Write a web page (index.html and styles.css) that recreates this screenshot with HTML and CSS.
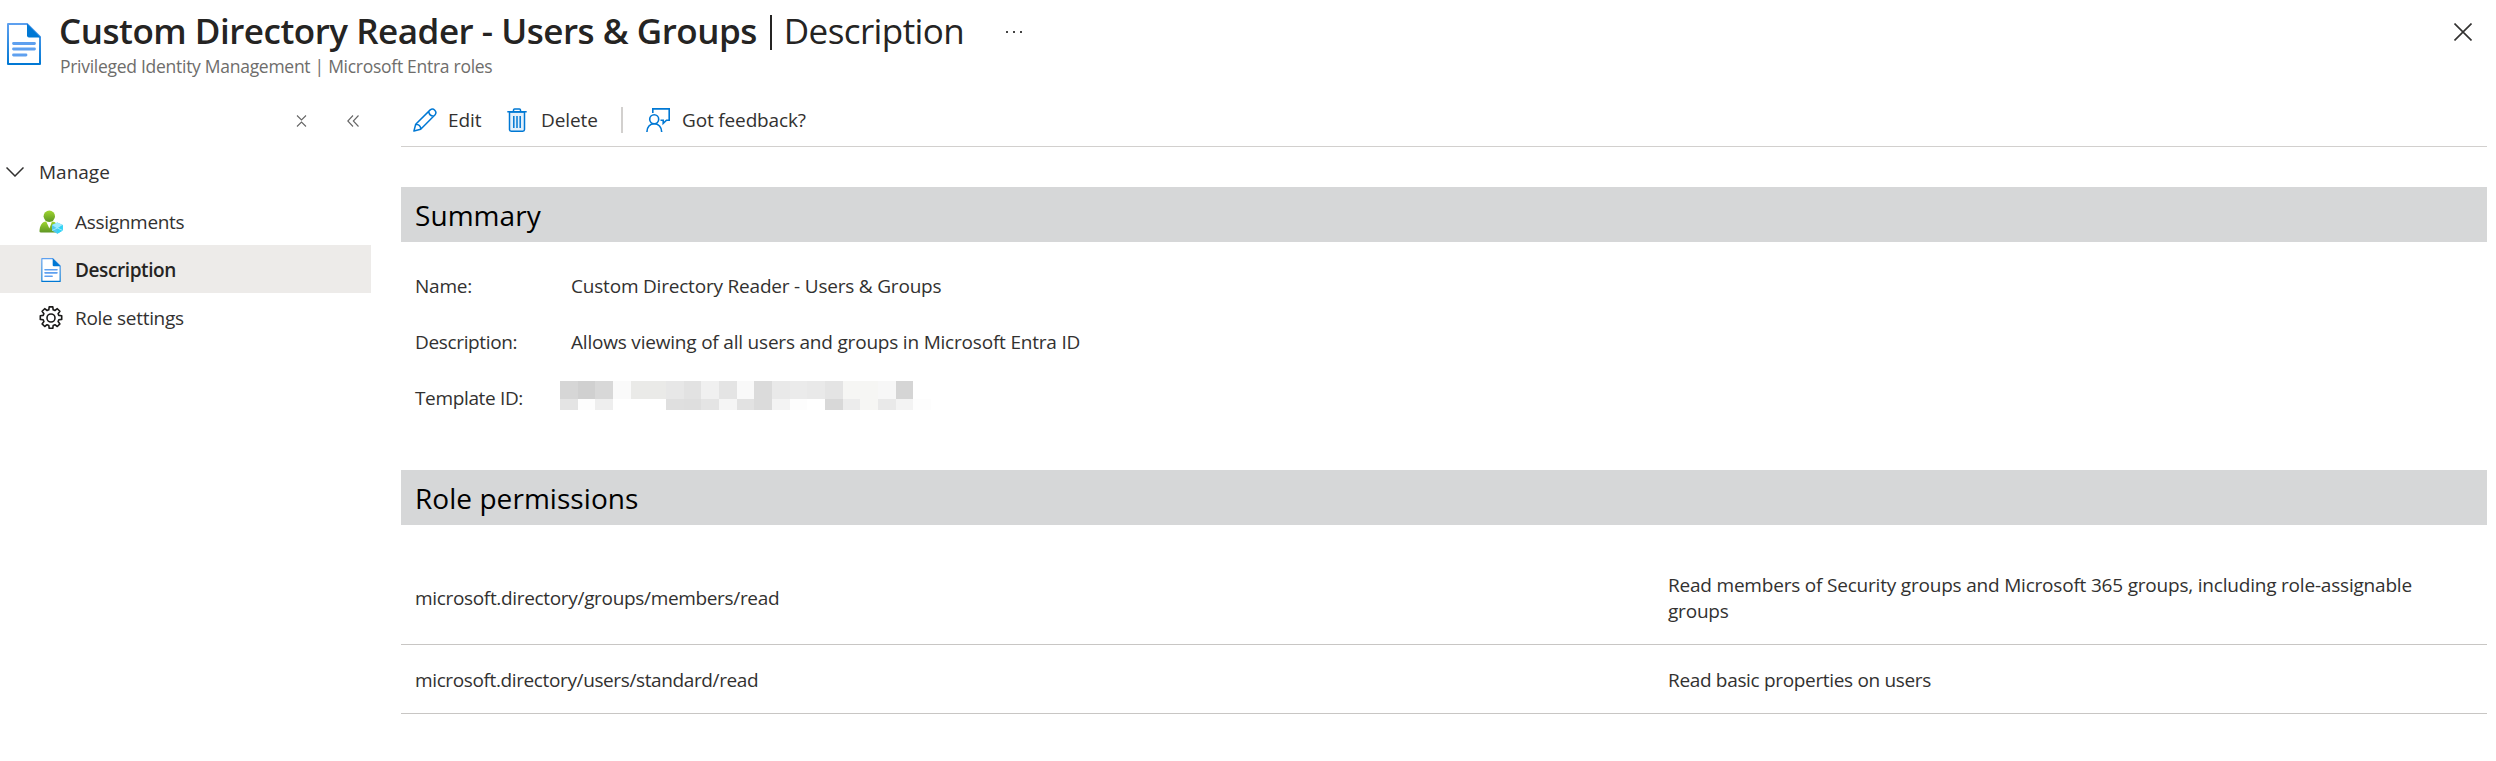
FILE: index.html
```html
<!DOCTYPE html>
<html lang="en">
<head>
<meta charset="utf-8">
<title>Custom Directory Reader - Users &amp; Groups | Description</title>
<link rel="stylesheet" href="styles.css">
</head>
<body>
<svg class="defs" width="0" height="0" aria-hidden="true">
  <defs>
    <linearGradient id="docEdge" x1="0" y1="1" x2="0" y2="0"><stop offset="0" stop-color="#0078d4"/><stop offset="1" stop-color="#5ea0ef"/></linearGradient>
    <linearGradient id="person" x1="0" y1="0" x2="0" y2="1"><stop offset="0" stop-color="#a0d62f"/><stop offset="1" stop-color="#5e9624"/></linearGradient>
    <symbol id="doc" viewBox="0 0 34 42">
      <path d="M1 1H20L33 14V41H1Z" fill="#fff" stroke="url(#docEdge)" stroke-width="2" stroke-linejoin="round"/>
      <path d="M20 .5L33.5 14.500H22Q20 14.500 20 12.500Z" fill="#0078d4"/>
      <path d="M6.500 20.500H27.500M6.500 26H27.500M6.500 32H19" stroke="#5ea0ef" stroke-width="2.800" stroke-linecap="round"/>
    </symbol>
  </defs>
</svg>

<header class="header">
  <svg class="header-icon" width="34" height="42"><use href="#doc"/></svg>
  <div class="header-text">
    <div class="title-row">
      <h1 class="title">Custom Directory Reader - Users &amp; Groups</h1>
      <span class="title-bar"></span>
      <span class="title-page">Description</span>
      <svg class="more" width="18" height="4" viewBox="0 0 18 4"><path d="M1 1h2v2H1zM8 1h2v2H8zM15 1h2v2h-2z" fill="#444"/></svg>
    </div>
    <div class="subtitle">Privileged Identity Management | Microsoft Entra roles</div>
  </div>
  <svg class="close" width="18" height="18" viewBox="0 0 18 18"><path d="M.5.5l17 17M17.500.5l-17 17" stroke="#323130" stroke-width="1.600"/></svg>
</header>

<div class="body">
  <nav class="side">
    <div class="side-tools">
      <svg width="11" height="12" viewBox="0 0 11 12" fill="none" stroke="#666" stroke-width="1.100"><path d="M1 .5l4.500 4.500L10 .5M1 11.500L5.500 7l4.500 4.500"/></svg>
      <svg width="12" height="12" viewBox="0 0 12 12" fill="none" stroke="#666" stroke-width="1.100"><path d="M6 .5L.8 6L6 11.500M11.500.5L6.300 6l5.200 5.500"/></svg>
    </div>
    <div class="side-group">
      <svg width="18" height="10" viewBox="0 0 18 10" fill="none" stroke="#323130" stroke-width="1.500"><path d="M.5.5L9 9L17.500.5"/></svg>
      <span>Manage</span>
    </div>
    <a class="side-item">
      <svg width="24" height="24" viewBox="0 0 24 24">
        <path d="M.5 21.500C.5 16 3 11.500 7 11.500H13C17 11.500 18.500 15 19 19V22.500H2Q.5 22.500.5 21.500Z" fill="url(#person)"/>
        <path d="M7.200 11.500H13L10.400 18.500Z" fill="#fff"/>
        <circle cx="10.300" cy="6.200" r="5.700" fill="url(#person)"/>
        <path d="M18.300 12.500L23.800 15V20.500L18.300 23.800L13 20.500V15Z" fill="#50c8ee"/>
        <path d="M13 15L18.300 12.500L23.800 15L18.300 18.500Z" fill="#9cebff"/>
        <path d="M18.300 18.500L23.800 15V20.500L18.300 23.800Z" fill="#32d4f5"/>
        <path d="M13 20.500L18.300 18L23.800 20.500" fill="none" stroke="#b5f1ff" stroke-width=".8"/>
      </svg>
      <span>Assignments</span>
    </a>
    <a class="side-item active">
      <svg width="24" height="24" viewBox="-2 0 24 24"><use href="#doc" width="20" height="24"/></svg>
      <span>Description</span>
    </a>
    <a class="side-item">
      <svg width="24" height="24" viewBox="0 0 24 24" fill="none" stroke="#1b1a19" stroke-width="1.600" stroke-linejoin="round">
        <path d="M10.200.9h3.600l.4 2.900 1.700.7 2.400-1.800 2.600 2.600-1.800 2.400.7 1.700 2.900.4v3.600l-2.900.4-.7 1.700 1.800 2.400-2.600 2.600-2.400-1.800-1.700.7-.4 2.900h-3.600l-.4-2.900-1.700-.7-2.400 1.800-2.600-2.600 1.800-2.400-.7-1.700-2.900-.4V9.800l2.900-.4.7-1.700L3.100 5.300l2.600-2.600 2.400 1.800 1.700-.7z"/>
        <circle cx="12" cy="12" r="4"/>
      </svg>
      <span>Role settings</span>
    </a>
  </nav>

  <main class="main">
    <div class="toolbar">
      <div class="cmd edit">
        <svg width="24" height="24" viewBox="0 0 24 24" fill="none" stroke="#0078d4" stroke-width="1.500" stroke-linejoin="round"><path d="M.9 23.100L2.700 16.200L17.200 1.900A3.500 3.500 0 0 1 22.100 6.800L7.700 21.300ZM2.700 16.200C5.500 16 8 18.300 7.700 21.300M15.700 3.400C16 6.200 17.800 8 20.600 8.300"/></svg>
        <span>Edit</span>
      </div>
      <div class="cmd delete">
        <svg width="20" height="24" viewBox="0 0 20 24" fill="none" stroke="#0078d4" stroke-width="1.500"><path d="M2.500 4V21.500Q2.500 23.200 4.200 23.200H15.800Q17.500 23.200 17.500 21.500V4Z" fill="#e3f0fb"/><path d="M.3 3.700H19.700M6.500 3.700V2Q6.500.9 7.600.9H12.400Q13.500.9 13.500 2V3.700M6.800 8V20M10 8V20M13.200 8V20"/></svg>
        <span>Delete</span>
      </div>
      <span class="divider"></span>
      <div class="cmd feedback">
        <svg width="24" height="24" viewBox="0 0 24 24" fill="none" stroke="#0078d4" stroke-width="1.600"><circle cx="8.200" cy="11.200" r="4.500"/><path d="M.9 24C.9 19 4 15.800 8.200 15.800S15.700 19 15.700 24M6.800 5V.9H23.200V12.200H20.500L17.200 15.300V12.200H14.500"/></svg>
        <span>Got feedback?</span>
      </div>
    </div>

    <h2 class="band summary">Summary</h2>
    <dl class="props">
      <div class="prop"><dt class="k-name">Name:</dt><dd>Custom Directory Reader - Users &amp; Groups</dd></div>
      <div class="prop"><dt>Description:</dt><dd>Allows viewing of all users and groups in Microsoft Entra ID</dd></div>
      <div class="prop"><dt>Template ID:</dt>
        <dd class="mask">
          <svg width="371" height="29" viewBox="0 0 21 29" preserveAspectRatio="none" shape-rendering="crispEdges">
            <g><rect width="1" height="18" fill="#d6d6d6"/><rect x="1" width="1" height="18" fill="#d0d0d0"/><rect x="2" width="1" height="18" fill="#d8d8d8"/><rect x="3" width="1" height="18" fill="#fafafa"/><rect x="4" width="2" height="18" fill="#eaeae8"/><rect x="6" width="1" height="18" fill="#e7e7e7"/><rect x="7" width="1" height="18" fill="#e2e2e2"/><rect x="8" width="1" height="18" fill="#f0f0f0"/><rect x="9" width="1" height="18" fill="#e4e4e4"/><rect x="10" width="1" height="18" fill="#f9f9f9"/><rect x="11" width="1" height="18" fill="#dbdbdb"/><rect x="12" width="1" height="18" fill="#e9e9e9"/><rect x="13" width="1" height="18" fill="#ebebeb"/><rect x="14" width="1" height="18" fill="#e9e9e9"/><rect x="15" width="1" height="18" fill="#e4e4e4"/><rect x="16" width="2" height="18" fill="#f6f6f4"/><rect x="18" width="1" height="18" fill="#f7f7f7"/><rect x="19" width="1" height="18" fill="#d5d5d5"/></g>
            <g><rect y="18" width="1" height="11" fill="#e4e4e4"/><rect x="1" y="18" width="1" height="11" fill="#fdfdfd"/><rect x="2" y="18" width="1" height="11" fill="#eeeeee"/><rect x="6" y="18" width="1" height="11" fill="#dfdfdf"/><rect x="7" y="18" width="1" height="11" fill="#dedede"/><rect x="8" y="18" width="1" height="11" fill="#e4e4e4"/><rect x="9" y="18" width="1" height="11" fill="#f5f5f5"/><rect x="10" y="18" width="1" height="11" fill="#e2e2e2"/><rect x="11" y="18" width="1" height="11" fill="#dbdbdb"/><rect x="12" y="18" width="1" height="11" fill="#f3f3f3"/><rect x="13" y="18" width="1" height="11" fill="#fdfdfd"/><rect x="15" y="18" width="1" height="11" fill="#d8d8d8"/><rect x="16" y="18" width="1" height="11" fill="#ececec"/><rect x="17" y="18" width="1" height="11" fill="#f6f6f4"/><rect x="18" y="18" width="1" height="11" fill="#e9e9e9"/><rect x="19" y="18" width="1" height="11" fill="#f3f3f3"/><rect x="20" y="18" width="1" height="11" fill="#fdfdfd"/></g>
          </svg>
        </dd>
      </div>
    </dl>

    <h2 class="band">Role permissions</h2>
    <div class="perms">
      <div class="perm tall"><span class="perm-id">microsoft.directory/groups/members/read</span><span class="perm-desc">Read members of Security groups and Microsoft 365 groups, including role-assignable groups</span></div>
      <div class="perm"><span class="perm-id users">microsoft.directory/users/standard/read</span><span class="perm-desc short">Read basic properties on users</span></div>
    </div>
  </main>
</div>
</body>
</html>
```
FILE: styles.css
```css
* { box-sizing: border-box; }
body {
  margin: 0;
  background: #fff;
  color: #323130;
  font: 19px/26px "Open Sans", "Noto Sans", sans-serif;
  letter-spacing: -.2px;
}
svg { display: block; flex: none; }
.defs { position: absolute; }
h1, h2, dl, dt, dd { margin: 0; font-weight: 400; }

.header { display: flex; align-items: flex-start; height: 93px; padding: 6px 24px 0 7px; }
.header-icon { margin-top: 17px; }
.header-text { flex: 1; margin-left: 18px; }
.title-row { display: flex; align-items: center; height: 48px; color: #252423; font-size: 35px; line-height: 48px; white-space: nowrap; }
.title { padding-top: 1px; font-size: 35px; font-weight: 600; letter-spacing: -.48px; }
.title-bar { width: 2px; height: 35px; margin: 5px 0 0 13px; background: #252423; }
.title-page { margin-left: 12px; padding-top: 1px; letter-spacing: -.6px; }
.more { margin: 3px 0 0 41px; }
.subtitle { padding-left: 1px; color: #6e6d6b; font-size: 17.5px; line-height: 24px; letter-spacing: -.28px; }
.close { margin-top: 17px; }

.body { display: flex; align-items: flex-start; }
.side { width: 371px; }
.side-tools { display: flex; justify-content: flex-end; align-items: center; gap: 40px; height: 54px; padding: 2px 12px 0 0; }
.side-group { display: flex; align-items: center; gap: 15px; height: 50px; padding-left: 6px; letter-spacing: 0; }
.side-item { display: flex; align-items: center; gap: 12px; height: 48px; padding: 1px 0 0 39px; letter-spacing: -.3px; }
.side-item span { padding-top: 1px; }
.side-item.active { background: #edebe9; color: #252423; font-weight: 600; letter-spacing: -.4px; }

.main { flex: 1; margin: 0 9px 0 30px; }
.toolbar { display: flex; align-items: center; height: 54px; padding-left: 12px; border-bottom: 1px solid #d2d0ce; letter-spacing: -.1px; }
.cmd { display: flex; align-items: center; }
.edit { gap: 11px; width: 94px; }
.delete { gap: 14px; width: 114px; }
.feedback { gap: 12px; letter-spacing: -.15px; }
.divider { width: 2px; height: 26px; margin-right: 23px; background: #d2d0ce; }
.band { height: 55px; padding-left: 14px; background: #d6d7d8; color: #000; font-size: 28px; line-height: 56px; letter-spacing: .05px; }
.summary { margin-top: 40px; }
.props { margin: 16px 0 44px; }
.prop { display: flex; align-items: center; height: 56px; padding-left: 14px; }
.prop dt { width: 156px; letter-spacing: -.35px; }
.prop .k-name { letter-spacing: -.2px; }
.mask { margin: -5px 0 0 -11px; }
.perms { margin-top: 26px; }
.perm { display: grid; grid-template-columns: 1253px 1fr; align-items: center; height: 69px; padding: 1px 50px 0 14px; border-bottom: 1px solid #c8c6c4; }
.perm.tall { height: 94px; }
.perm-id { letter-spacing: -.33px; }
.perm-id.users { letter-spacing: -.38px; }
.perm-desc.short { letter-spacing: -.33px; }
```
